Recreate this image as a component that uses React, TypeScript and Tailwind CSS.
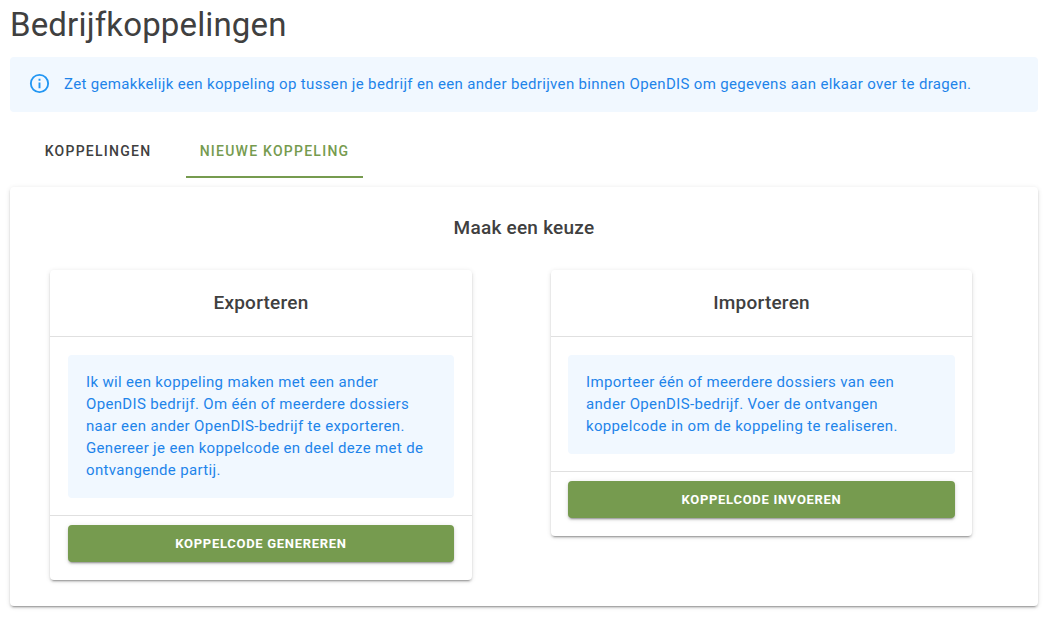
import React from "react";

const cardShadow = "shadow-[0_3px_1px_-2px_rgba(0,0,0,0.2),0_2px_2px_0_rgba(0,0,0,0.14),0_1px_5px_0_rgba(0,0,0,0.12)]";

function ChoiceCard({ title, text, action, className, padding }: { title: string; text: React.ReactNode; action: string; className: string; padding: string }) {
  return (
    <div className={`flex flex-col rounded bg-white ${cardShadow} ${className}`}>
      <div className="flex h-[66px] items-center justify-center text-[19px] font-medium tracking-[0.0125em] text-[#404040]">{title}</div>
      <div className={`border-t border-[#e0e0e0] pt-[18px] pb-[17px] ${padding}`}>
        <div className="rounded bg-[#f1f8ff] px-[18px] pt-[15.5px] pb-[17.5px] text-[15px] leading-[22px] tracking-[0.34px] text-[#1e84ea]">{text}</div>
      </div>
      <div className={`border-t border-[#e0e0e0] pt-[9px] pb-[18px] ${padding}`}>
        <button className={`flex h-[37px] w-full items-center justify-center rounded bg-[#769b4f] text-[13px] font-bold tracking-[0.7px] text-white ${cardShadow}`}>{action}</button>
      </div>
    </div>
  );
}

export default function App() {
  return (
    <div className="min-h-[631px] w-[1060px] bg-white pr-[22px] pl-[10px] font-['Roboto',sans-serif] text-[#404040]">
      <h1 className="h-[57px] pt-[6px] text-[33px] leading-[38px] tracking-[0.15px] text-[#404040]">Bedrijfkoppelingen</h1>
      <div className="flex h-[55px] items-center rounded bg-[#f1f8ff] pl-[18px] text-[15px] tracking-[0.34px] text-[#1e84ea]">
        <svg width="23" height="23" viewBox="0 0 24 24" fill="#2196f3" className="mr-[13px] mb-[3px] shrink-0">
          <path d="M11 9h2V7h-2m1 13c-4.41 0-8-3.59-8-8s3.59-8 8-8 8 3.59 8 8-3.59 8-8 8m0-18A10 10 0 0 0 2 12a10 10 0 0 0 10 10 10 10 0 0 0 10-10A10 10 0 0 0 12 2m-1 15h2v-6h-2v6z" />
        </svg>
        <span>Zet gemakkelijk een koppeling op tussen je bedrijf en een ander bedrijven binnen OpenDIS om gegevens aan elkaar over te dragen.</span>
      </div>
      <div className="mt-[18px] flex h-[48px] text-[14px] font-medium tracking-[0.0892857em]">
        <div className="flex w-[176px] items-center justify-center pb-[6px]">KOPPELINGEN</div>
        <div className="flex w-[177px] items-center justify-center border-b-2 border-[#769b4f] pb-[4px] text-[#769b4f]">NIEUWE KOPPELING</div>
      </div>
      <div className={`mt-[9px] h-[419px] rounded bg-white px-[40px] ${cardShadow}`}>
        <div className="flex h-[83px] items-center justify-center pb-[1px] text-[19px] font-medium tracking-[0.0125em] text-[#404040]">Maak een keuze</div>
        <div className="flex items-start">
          <ChoiceCard
            className="w-[422px]"
            padding="px-[18px]"
            title="Exporteren"
            action="KOPPELCODE GENEREREN"
            text={<>Ik wil een koppeling maken met een ander<br />OpenDIS bedrijf. Om één of meerdere dossiers<br />naar een ander OpenDIS-bedrijf te exporteren.<br />Genereer je een koppelcode en deel deze met de<br />ontvangende partij.</>}
          />
          <ChoiceCard
            className="ml-[79px] w-[421px]"
            padding="px-[17px]"
            title="Importeren"
            action="KOPPELCODE INVOEREN"
            text={<>Importeer één of meerdere dossiers van een<br />ander OpenDIS-bedrijf. Voer de ontvangen<br />koppelcode in om de koppeling te realiseren.</>}
          />
        </div>
      </div>
    </div>
  );
}
